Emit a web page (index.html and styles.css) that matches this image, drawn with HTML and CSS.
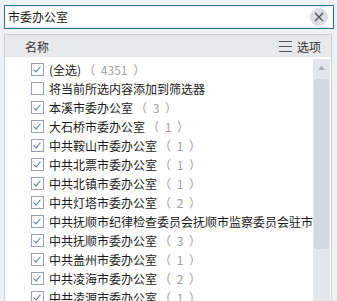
FILE: index.html
```html
<!DOCTYPE html>
<html lang="zh">
<head>
<meta charset="utf-8">
<link rel="stylesheet" href="styles.css">
</head>
<body>
<div class="search">
  <span class="search-text">市委办公室</span>
  <span class="clear"><svg width="10" height="10" viewBox="0 0 10 10"><path d="M1 1L9 9M9 1L1 9" stroke="#555" stroke-width="1.4"/></svg></span>
</div>
<div class="panel">
  <div class="header">
    <span class="h-name">名称</span>
    <span class="h-opt"><svg class="menu" width="13" height="12" viewBox="0 0 13 12"><path d="M0 1.5H13M0 6.5H13M0 11.5H13" stroke="#555" stroke-width="1"/></svg>选项</span>
  </div>
  <div class="body">
    <div class="list">
      <div class="row"><span class="cb on"></span><span class="label">(全选)</span><span class="count">（ 4351 ）</span></div>
      <div class="row"><span class="cb"></span><span class="label">将当前所选内容添加到筛选器</span></div>
      <div class="row"><span class="cb on"></span><span class="label">本溪市委办公室</span><span class="count">（ 3 ）</span></div>
      <div class="row"><span class="cb on"></span><span class="label">大石桥市委办公室</span><span class="count">（ 1 ）</span></div>
      <div class="row"><span class="cb on"></span><span class="label">中共鞍山市委办公室</span><span class="count">（ 1 ）</span></div>
      <div class="row"><span class="cb on"></span><span class="label">中共北票市委办公室</span><span class="count">（ 1 ）</span></div>
      <div class="row"><span class="cb on"></span><span class="label">中共北镇市委办公室</span><span class="count">（ 1 ）</span></div>
      <div class="row"><span class="cb on"></span><span class="label">中共灯塔市委办公室</span><span class="count">（ 2 ）</span></div>
      <div class="row"><span class="cb on"></span><span class="label">中共抚顺市纪律检查委员会抚顺市监察委员会驻市委办公室</span></div>
      <div class="row"><span class="cb on"></span><span class="label">中共抚顺市委办公室</span><span class="count">（ 3 ）</span></div>
      <div class="row"><span class="cb on"></span><span class="label">中共盖州市委办公室</span><span class="count">（ 1 ）</span></div>
      <div class="row"><span class="cb on"></span><span class="label">中共凌海市委办公室</span><span class="count">（ 2 ）</span></div>
      <div class="row"><span class="cb on"></span><span class="label">中共凌源市委办公室</span><span class="count">（ 1 ）</span></div>
    </div>
    <div class="scrollbar">
      <svg class="arrow" width="7" height="4" viewBox="0 0 7 4"><path d="M0 4L3.5 0L7 4Z" fill="#a8adb8"/></svg>
      <div class="thumb"></div>
    </div>
  </div>
</div>
</body>
</html>
```
FILE: styles.css
```css
html, body {
  margin: 0;
  padding: 0;
  height: 100%;
  overflow: hidden;
}
body {
  background: #eef2f6;
  font-family: "Noto Sans CJK SC", "Noto Sans", sans-serif;
  font-size: 12px;
  color: #1a1a1a;
}
.search {
  margin: 5px 3px 0 4px;
  height: 24px;
  box-sizing: border-box;
  border: 1px solid #2f7391;
  background: #fff;
  display: flex;
  align-items: center;
  padding-left: 3px;
}
.search-text {
  flex: 1;
  line-height: 16px;
}
.clear {
  width: 18px;
  height: 18px;
  border-radius: 50%;
  background: #dadde1;
  display: flex;
  align-items: center;
  justify-content: center;
  margin-right: 5px;
}
.panel {
  margin: 5px 5px 0 4px;
  border: 1px solid #cdd0d3;
  border-bottom: none;
  background: #fff;
  height: 300px;
  box-sizing: border-box;
}
.header {
  height: 22px;
  background: #e7e8e9;
  display: flex;
  align-items: center;
  justify-content: space-between;
  padding: 0 10px 0 20px;
  color: #333;
}
.h-opt {
  display: flex;
  align-items: center;
  gap: 5px;
}
.body {
  display: flex;
  height: 260px;
}
.list {
  flex: 1;
  min-width: 0;
  padding-top: 3px;
  overflow: hidden;
}
.row {
  height: 19px;
  display: flex;
  align-items: center;
  padding-left: 26px;
  white-space: nowrap;
}
.cb {
  flex: none;
  width: 11px;
  height: 11px;
  border: 1px solid #97a2ae;
  background: #fff;
  margin-right: 5px;
  position: relative;
}
.cb.on::after {
  content: "";
  position: absolute;
  left: 3px;
  top: 1px;
  width: 3px;
  height: 6px;
  border: solid #5877a0;
  border-width: 0 1.5px 1.5px 0;
  transform: rotate(40deg);
}
.label {
  flex: none;
}
.count {
  flex: none;
  color: #a0a0a0;
  margin-left: 2px;
  word-spacing: 3px;
}
.scrollbar {
  flex: none;
  width: 17px;
  margin-top: 2px;
  margin-right: 1px;
  background: #e4e6eb;
  display: flex;
  flex-direction: column;
  align-items: center;
}
.arrow {
  margin-top: 7px;
}
.thumb {
  margin-top: 9px;
  width: 15px;
  height: 170px;
  border-radius: 4px;
  background: #d3d7df;
}
```
